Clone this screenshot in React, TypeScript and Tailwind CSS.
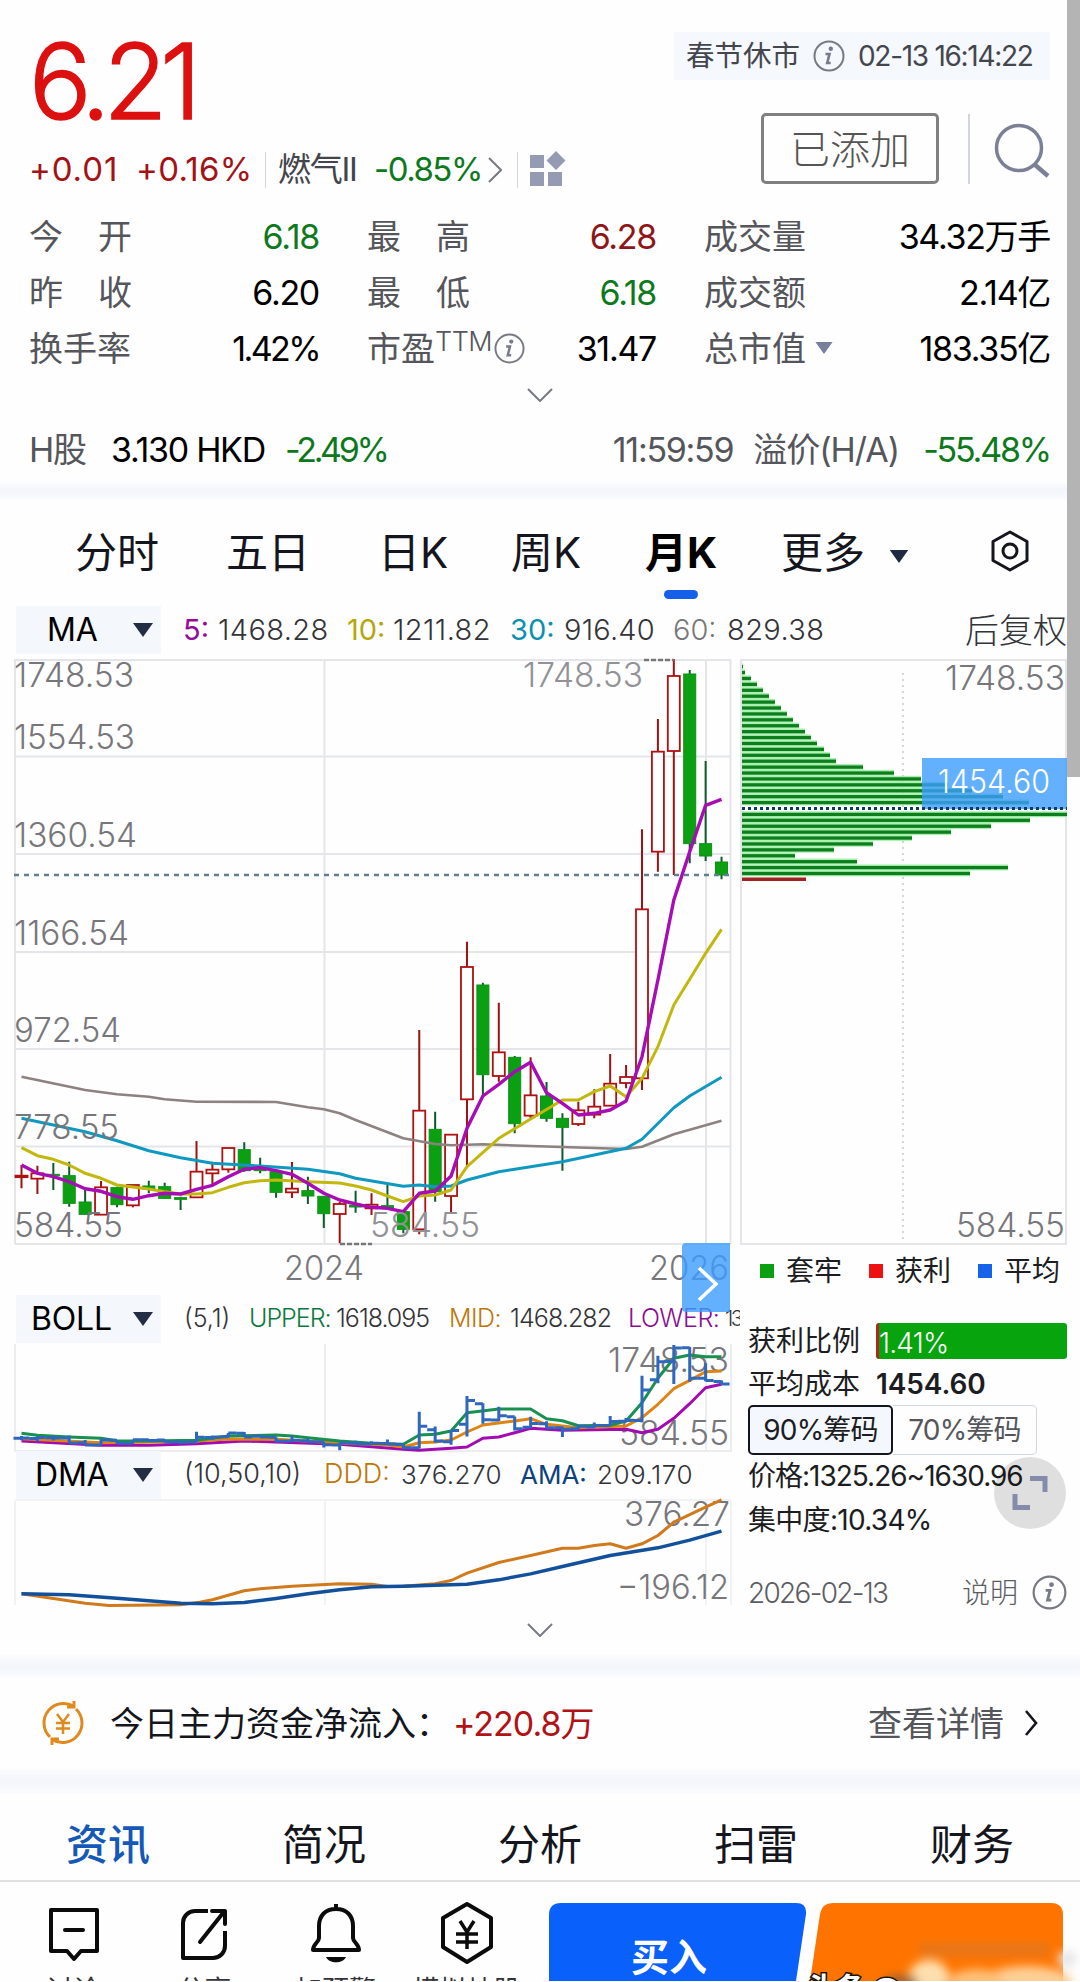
import type { ReactNode } from "react";

type Point = [number, number];
// open/close top, open/close bottom, high, low
type Candle = { up: boolean; top: number; bottom: number; high: number; low: number };

const c = (dir: "r" | "g", top: number, bottom: number, high: number, low: number): Candle => ({
  up: dir === "r",
  top,
  bottom,
  high,
  low,
});

const candles: Candle[] = [
  c("r", 827, 831, 795, 865),
  c("r", 820, 836, 797, 882),
  c("g", 823, 827, 789, 870),
  c("g", 827, 910, 785, 920),
  c("g", 906, 943, 862, 943),
  c("r", 862, 944, 843, 944),
  c("g", 863, 914, 860, 922),
  c("r", 855, 916, 855, 922),
  c("g", 858, 867, 842, 880),
  c("g", 860, 895, 848, 897),
  c("g", 893, 898, 890, 930),
  c("r", 815, 892, 723, 892),
  c("r", 809, 820, 785, 855),
  c("r", 744, 808, 744, 818),
  c("g", 749, 812, 727, 815),
  c("g", 799, 812, 773, 820),
  c("g", 815, 877, 813, 893),
  c("r", 866, 877, 786, 894),
  c("g", 872, 888, 830, 912),
  c("g", 889, 941, 888, 984),
  c("r", 912, 942, 905, 1030),
  c("g", 916, 921, 872, 938),
  c("r", 914, 925, 880, 945),
  c("g", 917, 925, 853, 927),
  c("g", 935, 988, 930, 1000),
  c("r", 632, 988, 390, 1003),
  c("g", 688, 875, 635, 905),
  c("r", 704, 888, 702, 940),
  c("r", 201, 598, 125, 800),
  c("g", 255, 524, 248, 590),
  c("r", 457, 528, 308, 545),
  c("g", 472, 671, 468, 700),
  c("r", 586, 647, 472, 655),
  c("g", 588, 655, 546, 665),
  c("g", 655, 682, 640, 812),
  c("r", 631, 672, 605, 678),
  c("r", 620, 644, 568, 655),
  c("r", 551, 617, 462, 617),
  c("r", 531, 549, 495, 565),
  c("r", 28, 535, -212, 570),
  c("r", -445, -145, -543, -85),
  c("r", -672, -447, -723, -75),
  c("g", -678, -169, -690, -110),
  c("g", -169, -132, -417, -117),
  c("g", -114, -75, -130, -62),
];

const ma5: Point[] = [
  [0, 795], [1, 820], [2, 830], [3, 845], [4, 866], [5, 874], [6, 890], [7, 898], [8, 887], [9, 880], [10, 882],
  [11, 868], [12, 856], [13, 830], [14, 808], [15, 803], [16, 812], [17, 823], [18, 850], [19, 880], [20, 900],
  [21, 912], [22, 922], [23, 925], [24, 935], [25, 880], [26, 873], [27, 828], [28, 685], [29, 588], [30, 553],
  [31, 515], [32, 487], [33, 578], [34, 610], [35, 645], [36, 640], [37, 630], [38, 603], [39, 470], [40, 240],
  [41, 0], [42, -145], [43, -284], [44, -302],
];
const ma10: Point[] = [
  [0, 743], [1, 767], [2, 778], [3, 795], [4, 820], [5, 835], [6, 855], [8, 867], [9, 875], [10, 882], [11, 882],
  [12, 878], [13, 862], [14, 848], [15, 842], [16, 840], [18, 845], [20, 849], [21, 858], [22, 870], [23, 888],
  [24, 905], [25, 888], [26, 885], [27, 870], [28, 800], [30, 715], [32, 657], [34, 600], [35, 600], [36, 575],
  [37, 558], [38, 590], [39, 535], [40, 440], [41, 315], [42, 238], [43, 160], [44, 88],
];
const ma30: Point[] = [
  [0, 655], [2, 675], [4, 695], [6, 722], [8, 752], [10, 773], [12, 790], [15, 798], [18, 808], [20, 821], [21, 835],
  [24, 859], [25, 855], [26, 860], [27, 858], [28, 840], [30, 815], [31, 808], [34, 785], [38, 745], [39, 718],
  [41, 623], [42, 588], [44, 532],
];
const ma60: Point[] = [
  [0, 530], [4, 570], [6, 583], [8, 590], [9, 598], [11, 605], [16, 606], [18, 622], [19, 628], [20, 640], [21, 660],
  [24, 715], [26, 732], [27, 736], [29, 733], [32, 738], [38, 747], [39, 740], [41, 703], [44, 662],
];
const bollUpper: Point[] = [
  [0, 337], [1, 343], [3, 348], [5, 352], [6, 359], [8, 360], [11, 358], [13, 345], [16, 342], [17, 345], [18, 350],
  [20, 360], [22, 367], [24, 370], [25, 342], [26, 340], [27, 330], [28, 275], [30, 264], [32, 264], [33, 293],
  [34, 299], [35, 314], [37, 313], [38, 300], [39, 245], [40, 172], [41, 112], [42, 102], [43, 107], [44, 107],
];
const bollMid: Point[] = [
  [0, 353], [5, 365], [8, 363], [11, 360], [13, 354], [16, 355], [20, 366], [23, 372], [24, 378], [25, 365],
  [26, 363], [27, 357], [28, 333], [29, 312], [31, 300], [32, 293], [33, 310], [35, 320], [38, 315], [39, 290],
  [40, 250], [41, 203], [42, 178], [43, 152], [44, 150],
];
const bollLower: Point[] = [
  [0, 360], [5, 373], [8, 373], [11, 368], [14, 360], [20, 370], [24, 385], [25, 388], [27, 382], [28, 378],
  [29, 352], [30, 348], [31, 335], [32, 322], [34, 328], [38, 325], [39, 335], [40, 325], [41, 292], [42, 248],
  [43, 200], [44, 190],
];
const ddd: Point[] = [
  [0, 820], [2, 834], [4, 848], [5.5, 855], [10, 853], [11.2, 845], [12, 838], [14, 811], [15, 805], [17, 797],
  [20, 790], [22, 791], [23, 798], [24, 797], [26, 790], [27, 780], [28, 758], [30, 726], [32, 705], [34, 683],
  [35, 683], [36, 675], [37, 670], [38, 683], [39, 670], [40, 645], [41, 605], [43, 560], [44, 538],
];
const ama: Point[] = [
  [0, 820], [3, 823], [6, 833], [10, 848], [12, 850], [14, 846], [16, 834], [18, 820], [20, 808], [22, 799],
  [24, 797], [28, 791], [30, 778], [32, 760], [34, 738], [37, 705], [40, 682], [42, 659], [44, 632],
];

const trapped = [
  1, 3, 9, 15, 21, 27, 33, 39, 45, 51, 57, 63, 69, 75, 82, 88, 94, 121, 152, 179, 206, 230, 261, 287, 0, 325, 288, 249,
  209, 170, 131, 92, 53, 115, 266, 228,
];

const toX = (i: number) => 21.5 + i * 15.91;
const mainY = (v: number) => 241 + v / 3;
const subY = (v: number, top: number) => v / 3 - top;
const bollScale = (v: number) => 72 + (v + 723) * 0.18;

const path = (points: Point[], y: (v: number) => number) =>
  points.map(([i, v]) => `${toX(i).toFixed(1)},${y(v).toFixed(1)}`).join(" ");

const Line = ({ points, y, color, width = 3 }: { points: Point[]; y: (v: number) => number; color: string; width?: number }) => (
  <polyline points={path(points, y)} fill="none" stroke={color} strokeWidth={width} strokeLinejoin="round" />
);

const Label = ({ x, y, w, children, end, fill = "#77777b", size = 34 }: {
  x: number; y: number; w: number; children: string; end?: boolean; fill?: string; size?: number;
}) => (
  <text
    x={end ? x - w : x}
    y={y}
    textLength={w}
    lengthAdjust="spacingAndGlyphs"
    fontSize={size}
    fontWeight={300}
    fill={fill}
  >
    {children}
  </text>
);

const Info = ({ className }: { className?: string }) => (
  <svg viewBox="0 0 32 32" className={className} fill="none">
    <circle cx="16" cy="16" r="14.5" stroke="#777a82" strokeWidth="2" />
    <circle cx="17.8" cy="8.8" r="2.2" fill="#777a8c" />
    <path d="M12.500 14h4l-2.300 9h3.500" stroke="#777a8c" strokeWidth="2.600" />
  </svg>
);

const Down = ({ className }: { className?: string }) => (
  <svg viewBox="0 0 20 14" className={className}>
    <path d="M0 0h20l-10 14z" fill="currentColor" />
  </svg>
);

const Chevron = ({ className }: { className?: string }) => (
  <svg viewBox="0 0 26 14" className={className} fill="none">
    <path d="M1 1l12 12L25 1" stroke="#777a82" strokeWidth="2" />
  </svg>
);

const Band = ({ className }: { className: string }) => (
  <div className={`bg-gradient-to-b from-[#fbfcfe] via-[#f3f5fb] to-[#fbfcfe] ${className}`} />
);

const Stat = ({ label, value, color = "text-black" }: { label: ReactNode; value: string; color?: string }) => (
  <div className="flex items-center justify-between">
    <span className="flex items-center text-[#55565c]">{label}</span>
    <span className={value.endsWith("%") ? `tracking-[-2.6px] ${color}` : `tracking-[-1.3px] ${color}`}>{value}</span>
  </div>
);

const Spaced = ({ a, b }: { a: string; b: string }) => (
  <span className="flex w-[103px] justify-between">
    <span>{a}</span>
    <span>{b}</span>
  </span>
);

const Header = () => (
  <header className="h-[482px] pl-[29px] pr-[30px]">
    <div className="flex h-[204px] justify-between">
      <div className="flex flex-col">
        <div className="mt-[19px] h-[124px] text-[104px] font-light leading-[124px] tracking-[-7px] text-[#dd1010] [-webkit-text-stroke:1.5px_#dd1010]">
          6.21
        </div>
        <div className="mt-[5px] flex h-[44px] items-center text-[33px] tracking-[-1.3px] text-[#a51216]">
          <span className="w-[107px] tracking-[0.9px]">+0.01</span>
          <span className="w-[129px] tracking-[0.3px]">+0.16%</span>
          <span className="h-[36px] w-px bg-gray-300" />
          <span className="ml-[12px] w-[96px] text-[#44454b]">燃气II</span>
          <span className="w-[114px] tracking-[-1.5px] text-[#0c7a1c]">-0.85%</span>
          <svg viewBox="0 0 14 26" className="h-[26px] w-[14px]" fill="none">
            <path d="M1 1l12 12L1 25" stroke="#777a82" strokeWidth="2" />
          </svg>
          <span className="ml-[15px] h-[36px] w-px bg-gray-300" />
          <svg viewBox="0 0 36 36" className="-mt-[2px] ml-[12px] size-[36px]" fill="#949bb2">
            <path d="M0 4h14v13H0zM0 21h14v14H0zM18 21h14v14H18zM26 0l9.5 9.5L26 19l-9.5-9.5z" />
          </svg>
        </div>
      </div>
      <div className="flex flex-col items-end">
        <div className="mt-[32px] flex h-[48px] w-[376px] items-center justify-end bg-[#f5f8fd] pr-[16px] text-[28.5px] text-[#44464e]">
          春节休市
          <Info className="mx-[13px] size-[32px]" />
          <span className="w-[176px] whitespace-nowrap text-[28px] tracking-[-1.3px]">02-13 16:14:22</span>
        </div>
        <div className="mt-[33px] flex items-center">
          <div className="flex h-[71px] w-[178px] items-center justify-center rounded-[5px] border-[3px] border-[#808080] pt-[3px] text-[40px] font-light text-[#555]">
            已添加
          </div>
          <span className="ml-[29px] h-[70px] w-[2px] bg-gray-300" />
          <svg viewBox="0 0 56 56" className="ml-[24px] mt-[4px] size-[56px]" fill="none" stroke="#7b8096" strokeWidth="3.5">
            <circle cx="25" cy="25" r="22.5" />
            <path d="M40 41l14 12" strokeWidth="4.5" />
          </svg>
        </div>
      </div>
    </div>
    <div className="grid h-[172px] grid-cols-[290px_289px_1fr] grid-rows-3 gap-x-[48px] pt-[5px] text-[34px]">
      <Stat label={<Spaced a="今" b="开" />} value="6.18" color="text-[#0c7a1c]" />
      <Stat label={<Spaced a="最" b="高" />} value="6.28" color="text-[#8f1518]" />
      <Stat label="成交量" value="34.32万手" />
      <Stat label={<Spaced a="昨" b="收" />} value="6.20" />
      <Stat label={<Spaced a="最" b="低" />} value="6.18" color="text-[#0c7a1c]" />
      <Stat label="成交额" value="2.14亿" />
      <Stat label="换手率" value="1.42%" />
      <Stat
        label={
          <>
            市盈<span className="-mt-[12px] text-[27px] font-light tracking-[-0.5px]">TTM</span>
            <Info className="ml-[2px] size-[31px]" />
          </>
        }
        value="31.47"
      />
      <Stat
        label={
          <>
            总市值<Down className="ml-[9px] h-[12px] w-[18px] text-[#77809a]" />
          </>
        }
        value="183.35亿"
      />
    </div>
    <div className="flex justify-center pt-[12px]">
      <Chevron className="h-[14px] w-[26px]" />
    </div>
    <div className="mt-[23px] flex h-[48px] items-center text-[34px] tracking-[-1.3px]">
      <span className="w-[82px] text-[#55565c]">H股</span>
      <span className="w-[174px] whitespace-nowrap">3.130 HKD</span>
      <span className="tracking-[-3.3px] text-[#0c7a1c]">-2.49%</span>
      <span className="ml-auto text-[#55565c]">11:59:59</span>
      <span className="ml-[20px] tracking-[-1px] text-[#55565c]">溢价(H/A)</span>
      <span className="ml-[24px] tracking-[-2.2px] text-[#0c7a1c]">-55.48%</span>
    </div>
  </header>
);

const PeriodTabs = () => (
  <nav className="flex h-[108px] items-start pl-[75px] pt-[24px] text-[42px] leading-[58px] text-[#15161d]">
    <span className="w-[151px]">分时</span>
    <span className="w-[152px]">五日</span>
    <span className="w-[133px]">日K</span>
    <span className="w-[134px]">周K</span>
    <span className="flex w-[136px] flex-col font-bold text-black">
      月K
      <i className="ml-[19px] mt-[8px] h-[9px] w-[34px] rounded-full bg-[#1560e8]" />
    </span>
    <span className="w-[108px]">更多</span>
    <Down className="mt-[26px] h-[13px] w-[20px] text-[#1f2940]" />
    <svg viewBox="0 0 40 42" className="ml-[81px] mt-[6px] h-[42px] w-[40px]" fill="none" stroke="#15161d" strokeWidth="3">
      <path d="M20 2l17 9.5v19L20 40 3 30.500v-19z" strokeLinejoin="round" />
      <circle cx="20" cy="21" r="7" />
    </svg>
  </nav>
);

const Indicator = ({ name, pad, className = "" }: { name: string; pad: string; className?: string }) => (
  <div className={`flex h-[48px] w-[145px] shrink-0 items-center justify-between bg-[#f4f7fc] pr-[8px] text-[32px] text-black ${pad} ${className}`}>
    <span className="tracking-[-0.2px]">{name}</span>
    <Down className="h-[14px] w-[20px] text-[#232e44]" />
  </div>
);

const MaRow = () => (
  <div className="flex h-[51px] items-center pb-[7px] pl-[16px] text-[29px] font-light text-[#333338]">
    <Indicator name="MA" pad="pl-[31px]" className="font-normal" />
    <span className="ml-[22px] w-[35px] font-normal text-[#930d9c]">5:</span>
    <span className="w-[129px] tracking-[0.4px]">1468.28</span>
    <span className="w-[46px] font-normal text-[#b5a70a]">10:</span>
    <span className="w-[117px] tracking-[0.4px]">1211.82</span>
    <span className="w-[54px] font-normal text-[#0b90b0]">30:</span>
    <span className="w-[109px] tracking-[0.2px]">916.40</span>
    <span className="w-[54px] text-[#777]">60:</span>
    <span className="tracking-[0.4px]">829.38</span>
    <span className="ml-auto text-[34px] text-[#33343a]">后复权</span>
  </div>
);

const gridColor = "#e3e5e8";

const MainChart = () => (
  <svg viewBox="0 0 740 635" className="block h-[635px] w-[740px] overflow-visible">
    <g stroke={gridColor} strokeWidth="2" fill="none">
      <path d="M15 1H731M15 97.500H731M15 195H731M15 293H731M15 390H731M15 487.500H731M15 585H731" />
      <path d="M15 0V585M324.500 0V585M706 0V585M730.500 0V585" />
    </g>
    {candles.map((k, i) => {
      const x = toX(i);
      const color = k.up ? "#9c1213" : "#0f5a2a";
      return (
        <g key={i}>
          <path
            d={`M${x} ${mainY(k.high)}V${mainY(k.top)}M${x} ${mainY(k.bottom)}V${mainY(k.low)}`}
            stroke={color}
            strokeWidth="2"
          />
          <rect
            x={x - 6}
            y={mainY(k.top)}
            width="12"
            height={Math.max(1.5, mainY(k.bottom) - mainY(k.top))}
            fill={k.up ? "#fff" : "#0aa012"}
            stroke={k.up ? "#b01010" : "#0b9014"}
            strokeWidth={k.up ? 1.8 : 1}
          />
        </g>
      );
    })}
    <Line points={ma60} y={mainY} color="#8d827f" width={2.6} />
    <Line points={ma30} y={mainY} color="#0f98c0" />
    <Line points={ma10} y={mainY} color="#c2b70c" />
    <Line points={ma5} y={mainY} color="#a80cb4" width={3.4} />
    <path d="M14 216H731" stroke="#5f7f92" strokeWidth="2.5" strokeDasharray="5 5" />
    <path d="M644 1H674M340 585H372" stroke="#777" strokeWidth="2.500" strokeDasharray="5 2" />
    <Label x={14} y={28} w={120}>1748.53</Label>
    <Label x={14} y={90} w={121}>1554.53</Label>
    <Label x={14} y={188} w={123}>1360.54</Label>
    <Label x={14} y={286} w={115}>1166.54</Label>
    <Label x={14} y={383} w={107}>972.54</Label>
    <Label x={14} y={480} w={105}>778.55</Label>
    <Label x={14} y={578} w={109}>584.55</Label>
    <Label x={643} y={28} w={120} end fill="#929296">1748.53</Label>
    <Label x={370} y={578} w={110} fill="#929296">584.55</Label>
    <Label x={284} y={621} w={80}>2024</Label>
    <Label x={649} y={621} w={80}>2026</Label>
  </svg>
);

const BollChart = () => {
  const y = (v: number) => subY(v, 23);
  return (
    <svg viewBox="0 0 740 107" className="block h-[107px] w-[740px] overflow-visible">
      <path d="M15 0V107H731V0M325 0V107M706 0V107" stroke="#e6e8ea" strokeWidth="1.500" fill="none" />
      <Label x={729} y={28} w={121} end>1748.53</Label>
      <Label x={729} y={101} w={110} end>584.55</Label>
      <Line points={bollLower} y={y} color="#a30bb0" />
      <Line points={bollMid} y={y} color="#dd8415" />
      <Line points={bollUpper} y={y} color="#189050" />
      <g stroke="#2f67bd" strokeWidth="3" fill="none">
        {candles.map((k, i) => {
          const open = y(bollScale(k.up ? k.bottom : k.top));
          const close = y(bollScale(k.up ? k.top : k.bottom));
          const x = toX(i);
          return (
            <path
              key={i}
              d={`M${x - 8} ${open}H${x}M${x} ${close}H${x + 8}M${x} ${y(bollScale(k.high))}V${y(bollScale(k.low))}`}
            />
          );
        })}
      </g>
    </svg>
  );
};

const DmaChart = () => {
  const y = (v: number) => subY(v, 178.5);
  return (
    <svg viewBox="0 0 740 108" className="block h-[108px] w-[740px] overflow-visible">
      <path d="M15 1H731M15 2V106M325 2V106M706 2V106M731 2V106" stroke="#eceef0" strokeWidth="1.500" fill="none" />
      <Label x={730} y={27} w={106} end>376.27</Label>
      <Label x={729} y={100} w={112} end>−196.12</Label>
      <Line points={ddd} y={y} color="#d07a1c" />
      <Line points={ama} y={y} color="#12509c" width={3.4} />
    </svg>
  );
};

const ChipChart = () => (
  <svg viewBox="0 0 327 586" className="block h-[586px] w-[327px]">
    <path d="M1 1H326V585H1Z" stroke={gridColor} strokeWidth="2" fill="none" />
    <path d="M163 14V584" stroke="#d3d5da" strokeWidth="2" strokeDasharray="2 4" />
    {trapped.map((w, i) => (
      <g key={i}>
        <rect x="2" y={4.500 + i * 5.91} width={w} height="6" fill="#a9efb0" />
        <rect x="2" y={6 + i * 5.91} width={w} height="3.300" fill="#0c7f1c" />
      </g>
    ))}
    <rect x="2" y="218.500" width="64" height="3.500" fill="#a02323" />
    <Label x={325} y={31} w={120} end>1748.53</Label>
    <Label x={325} y={578} w={109} end>584.55</Label>
    <rect x="182" y="99" width="145" height="51" fill="#3c9cff" fillOpacity="0.8" />
    <path d="M2 149.500H327" stroke="#0c3a66" strokeWidth="3" strokeDasharray="3 3" />
    <Label x={198} y={134} w={112} fill="#ffffff" size={32}>1454.60</Label>
  </svg>
);

const LegendItem = ({ dot, children }: { dot: string; children: ReactNode }) => (
  <span className="flex items-center gap-[12px]">
    <i className={`size-[14px] ${dot}`} />
    {children}
  </span>
);

const ChipPanel = () => (
  <aside className="flex w-[327px] flex-col text-[28px] text-[#1c1d22]">
    <ChipChart />
    <div className="flex h-[52px] items-center justify-between pl-[20px] pr-[7px]">
      <LegendItem dot="bg-[#0aa012]">套牢</LegendItem>
      <LegendItem dot="bg-[#ee1111]">获利</LegendItem>
      <LegendItem dot="bg-[#1663ea]">平均</LegendItem>
    </div>
    <div className="flex flex-col pl-[8px]">
      <div className="mt-[22px] flex h-[44px] items-center gap-[16px]">
        获利比例
        <div className="flex h-[36px] flex-1 items-end rounded-[3px] border-l-[3px] border-[#b3261e] bg-[#07a40d] text-[28px] font-light leading-[31px] tracking-[-0.8px] text-white">
          1.41%
        </div>
      </div>
      <div className="flex h-[42px] items-center gap-[16px]">
        平均成本
        <b className="font-semibold tracking-[-0.1px]">1454.60</b>
      </div>
      <div className="flex h-[50px]">
        <div className="flex w-[145px] items-center justify-center rounded-[5px] border-2 border-[#15161d] bg-[#f4f8fe] tracking-[-0.800px]">
          90%筹码
        </div>
        <div className="flex w-[144px] items-center justify-center rounded-r-[5px] border border-l-0 border-gray-300 tracking-[-0.800px] text-[#55565c]">
          70%筹码
        </div>
      </div>
      <div className="h-[43px] whitespace-nowrap leading-[43px] tracking-[-1px]">价格:1325.26~1630.96</div>
      <div className="h-[44px] whitespace-nowrap leading-[44px] tracking-[-0.7px]">集中度:10.34%</div>
      <div className="mt-[30px] flex h-[41px] items-center font-light text-[#5c5d63]">
        <span className="tracking-[-1.7px]">2026-02-13</span>
        <span className="ml-auto">说明</span>
        <Info className="ml-[14px] size-[35px]" />
      </div>
    </div>
  </aside>
);

const Charts = () => (
  <section className="relative w-[1067px]">
    <MaRow />
    <div className="flex">
      <div className="w-[740px]">
        <MainChart />
        <div className="flex h-[50px] items-center overflow-hidden whitespace-nowrap pb-[1px] pl-[16px] text-[25px] font-light text-[#333338]">
          <Indicator name="BOLL" pad="pl-[15px]" className="font-normal" />
          <span className="ml-[23px] w-[65px] shrink-0">(5,1)</span>
          <span className="w-[87px] shrink-0 tracking-[-1px] text-[#0c7a3c]">UPPER:</span>
          <span className="w-[113px] shrink-0 tracking-[-1px]">1618.095</span>
          <span className="w-[61px] shrink-0 tracking-[-0.5px] text-[#bf7608]">MID:</span>
          <span className="w-[118px] shrink-0 tracking-[-0.9px]">1468.282</span>
          <span className="w-[97px] shrink-0 tracking-[-0.5px] text-[#8a0d93]">LOWER:</span>
          <span className="w-[17px] shrink-0 text-[21px] tracking-[-2.5px]">13</span>
        </div>
        <BollChart />
        <div className="flex h-[48px] items-center whitespace-nowrap pb-[1px] pl-[16px] text-[26px] font-light text-[#333338]">
          <Indicator name="DMA" pad="pl-[19px]" className="font-normal" />
          <span className="ml-[23px] w-[140px] text-[27px]">(10,50,10)</span>
          <span className="w-[77px] text-[27px] text-[#bf7608]">DDD:</span>
          <span className="w-[119px] tracking-[0.4px]">376.270</span>
          <span className="w-[77px] font-normal text-[#0b427d]">AMA:</span>
          <span className="tracking-[0.5px]">209.170</span>
        </div>
        <DmaChart />
      </div>
      <ChipPanel />
    </div>
    <div className="flex h-[42px] items-start justify-center pl-[12px] pt-[10px]">
      <Chevron className="h-[14px] w-[26px]" />
    </div>
    <div className="absolute left-[682px] top-[635px] flex h-[69px] w-[48px] items-center justify-center rounded-l-[4px] bg-[#3c9cff]/80">
      <svg viewBox="0 0 20 34" className="ml-[4px] mt-[12px] h-[34px] w-[20px]" fill="none">
        <path d="M1 1l17 16L1 33" stroke="#fff" strokeWidth="3.500" />
      </svg>
    </div>
    <div className="absolute left-[994px] top-[849px] flex size-[72px] items-center justify-center rounded-full bg-black/12">
      <svg viewBox="0 0 36 34" className="h-[34px] w-[36px]" fill="none" stroke="#858cab" strokeWidth="5">
        <path d="M18 2.500H33V16M3 18V31.500H18" />
      </svg>
    </div>
  </section>
);

const FundFlow = () => (
  <section className="flex h-[92px] items-center pl-[40px] pr-[42px] text-[34px] text-[#15161d]">
    <svg viewBox="0 0 46 48" className="h-[48px] w-[46px]" fill="none" stroke="#e08a1e" strokeWidth="3">
      <path d="M10 38A19.500 19.500 0 0 1 34 7.500M36 10A19.500 19.500 0 0 1 12 40.500" />
      <path d="M27 8h7V2M19 40h-7V46" />
      <path d="M17 15l6 8 6-8M23 23v12M16 24h14M16 29.500h14" strokeWidth="2.500" />
    </svg>
    <span className="ml-[24px] whitespace-nowrap">今日主力资金净流入：</span>
    <span className="ml-[3px] tracking-[-1px] text-[#b01216]">+220.8万</span>
    <span className="ml-auto text-[#55565c]">查看详情</span>
    <svg viewBox="0 0 14 26" className="ml-[20px] h-[26px] w-[14px]" fill="none">
      <path d="M2 1l10 12L2 25" stroke="#15161d" strokeWidth="2.600" />
    </svg>
  </section>
);

const sections = ["资讯", "简况", "分析", "扫雷", "财务"];

const SectionTabs = () => (
  <nav className="grid h-[88px] grid-cols-5 items-center border-b-2 border-[#dfe0e2] pt-[14px] text-center text-[42px] text-[#15161d]">
    {sections.map((s, i) => (
      <span key={s} className={i === 0 ? "font-medium text-[#1458b8]" : ""}>
        {s}
      </span>
    ))}
  </nav>
);

const Action = ({ label, children }: { label: string; children: ReactNode }) => (
  <div className="flex w-[131px] flex-col items-center">
    <svg viewBox="0 0 56 64" className="h-[64px] w-[56px] shrink-0" fill="none" stroke="#0b0b0c" strokeWidth="4" strokeLinejoin="round">
      {children}
    </svg>
    <span className="mt-[9px] whitespace-nowrap text-[27px] leading-[34px] text-[#333338]">{label}</span>
  </div>
);

const BottomBar = () => (
  <footer className="flex h-[99px] items-start overflow-hidden pl-[8px] pt-[19px]">
    <div className="flex w-[541px]">
      <Action label="讨论">
        <path d="M5 9h46v41H35l-7 8-7-8H5z" />
        <path d="M19 29h18" strokeLinecap="round" />
      </Action>
      <Action label="分享">
        <path d="M31 10H18A12 12 0 0 0 6 22v35h30a12 12 0 0 0 12-12V30" />
        <path d="M23 41L46 12M35 10h13v13" strokeLinecap="round" />
      </Action>
      <Action label="加预警">
        <path d="M28 8c-11 0-17 7-17 17v12c0 4-6 6-6 12h46c0-6-6-8-6-12V25c0-10-6-17-17-17zM28 8V3" />
        <path d="M18 56h20c-3 7-17 7-20 0z" fill="#0b0b0c" stroke="none" />
      </Action>
      <Action label="模拟炒股">
        <path d="M28 3l24 14v29L28 61 4 46V17z" />
        <path d="M21 20l7 11 7-11M28 31v17M17 33h22M17 41h22" strokeWidth="3.500" />
      </Action>
    </div>
    <svg viewBox="0 0 531 80" className="h-[80px] w-[531px] overflow-hidden">
      <defs>
        <filter id="soft" x="-50%" y="-50%" width="200%" height="200%">
          <feGaussianBlur stdDeviation="5" />
        </filter>
      </defs>
      <path d="M0 80V14Q0 2 12 2H247Q258 2 257 13L247 80Z" fill="#0a60fa" />
      <path d="M261 80L271 13Q273 2 284 2H502Q514 2 514 14V80Z" fill="#ff7400" />
      <text x="82" y="70" fontSize="38" fontWeight="700" fill="#fff">买入</text>
      <g filter="url(#soft)">
        <ellipse cx="380" cy="76" rx="20" ry="17" fill="#ffdfae" />
        <ellipse cx="352" cy="80" rx="18" ry="6" fill="#a06030" />
        <ellipse cx="478" cy="80" rx="45" ry="15" fill="#ffcf96" />
        <ellipse cx="428" cy="80" rx="28" ry="12" fill="#ffc078" />
        <rect x="370" y="42" width="130" height="13" fill="#c87a3a" fillOpacity="0.45" />
        <ellipse cx="518" cy="58" rx="9" ry="8" fill="#e5e5e5" />
      </g>
      <text x="258" y="98" fontSize="29" fontWeight="700" fill="#fff" stroke="#1a1208" strokeWidth="3" paintOrder="stroke">
        头条 @
      </text>
    </svg>
  </footer>
);

export default function App() {
  return (
    <div className="relative h-[1982px] w-[1080px] overflow-hidden bg-[#fefefe] font-['Inter','Noto_Sans_CJK_SC',sans-serif] text-black">
      <Header />
      <Band className="h-[18px]" />
      <PeriodTabs />
      <Charts />
      <Band className="h-[22px]" />
      <FundFlow />
      <Band className="h-[25px]" />
      <SectionTabs />
      <BottomBar />
      <div className="absolute right-0 top-0 h-[777px] w-[13px] bg-[#b4b4b4]" />
    </div>
  );
}
